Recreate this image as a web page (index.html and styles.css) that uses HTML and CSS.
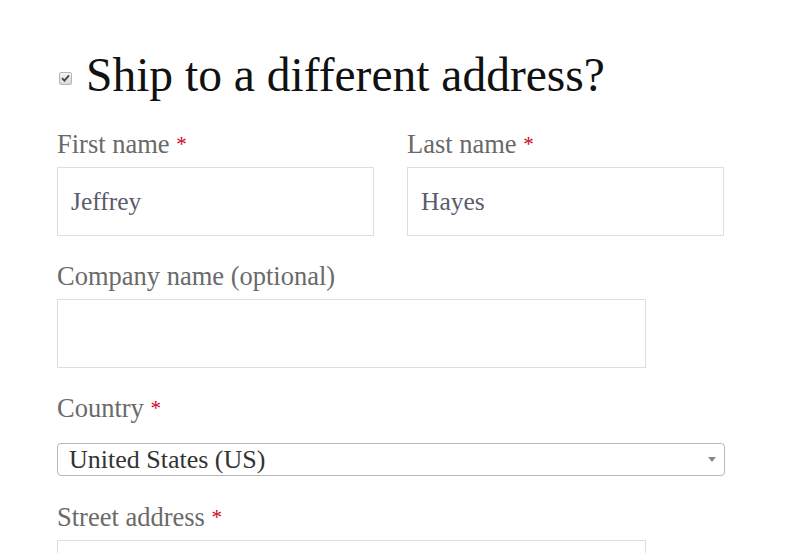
FILE: index.html
```html
<!DOCTYPE html>
<html>
<head>
<meta charset="utf-8">
<link rel="stylesheet" href="styles.css">
</head>
<body>
<div class="page">
  <h3 class="ship">
    <span class="check"><svg width="9" height="8" viewBox="0 0 9 8"><path d="M1 4.2 L3.4 6.6 L8 1.4" fill="none" stroke="#444" stroke-width="1.8"/></svg></span>
    <span>Ship to a different address?</span>
  </h3>
  <div class="row">
    <div class="field">
      <label class="lbl">First name <abbr class="req">*</abbr></label>
      <div class="input">Jeffrey</div>
    </div>
    <div class="field">
      <label class="lbl">Last name <abbr class="req">*</abbr></label>
      <div class="input">Hayes</div>
    </div>
  </div>
  <div class="field">
    <label class="lbl">Company name (optional)</label>
    <div class="input wide"></div>
  </div>
  <div class="field field-country">
    <label class="lbl lbl-country">Country <abbr class="req">*</abbr></label>
    <div class="select"><span>United States (US)</span><span class="arrow"></span></div>
  </div>
  <div class="field">
    <label class="lbl">Street address <abbr class="req">*</abbr></label>
    <div class="input wide"></div>
  </div>
</div>
</body>
</html>
```
FILE: styles.css
```css
html, body { margin: 0; padding: 0; background: #fff; }
body { font-family: "Liberation Serif", "DejaVu Serif", serif; overflow: hidden; height: 553px; }
.page { padding: 0 0 0 57px; width: 668px; }
.ship { display: flex; align-items: center; gap: 14px; margin: 0; padding-top: 49px; font-weight: normal; font-size: 47.5px; line-height: 52px; color: #111; }
.check { width: 11px; height: 11px; margin-left: 2px; margin-top: 6px; border: 1px solid #b5b5b5; border-radius: 2px; background: linear-gradient(#f4f4f4, #d9d9d9); display: flex; align-items: center; justify-content: center; }
.row { display: grid; grid-template-columns: 317px 317px; column-gap: 33px; margin-top: 28px; }
.field { margin-bottom: 25px; }
.field-country { margin-bottom: 26px; }
.lbl { display: block; font-size: 26.5px; line-height: 30px; color: #6a6a6a; margin-bottom: 8px; }
.req { color: #d0021b; text-decoration: none; border: 0; font-size: 21px; vertical-align: 2px; }
.input { box-sizing: border-box; height: 69px; border: 1px solid #dedede; padding: 0 13px; display: flex; align-items: center; font-size: 25.5px; color: #5b5b6b; }
.wide { width: 589px; }
.lbl-country { margin-bottom: 20px; }
.select { box-sizing: border-box; height: 33px; width: 668px; border: 1px solid #b9b9b9; border-radius: 4px; padding: 0 11px; display: flex; align-items: center; justify-content: space-between; font-size: 26px; color: #333; }
.arrow { width: 0; height: 0; border-left: 4px solid transparent; border-right: 4px solid transparent; border-top: 5px solid #888; margin-right: -3px; }
```
